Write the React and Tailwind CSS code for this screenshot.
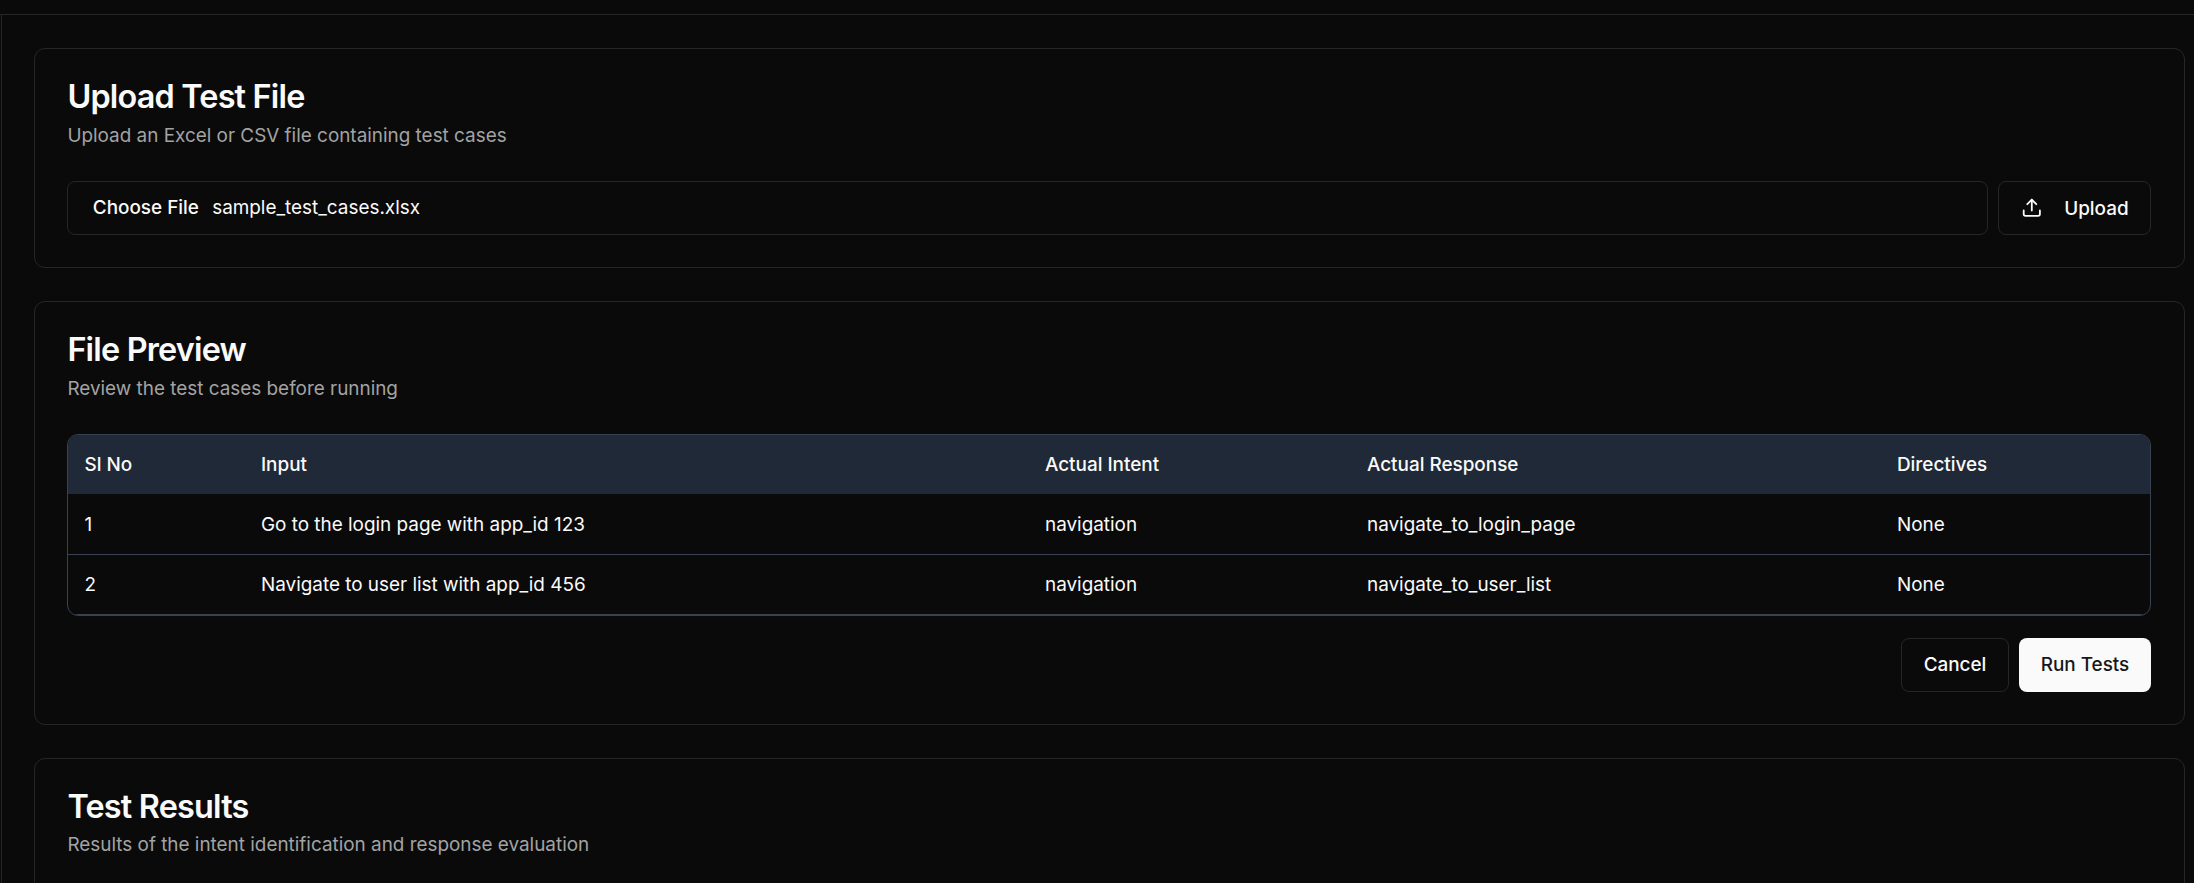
import { Upload } from "lucide-react";

const columns = ["Sl No", "Input", "Actual Intent", "Actual Response", "Directives"];

const rows = [
  ["1", "Go to the login page with app_id 123", "navigation", "navigate_to_login_page", "None"],
  ["2", "Navigate to user list with app_id 456", "navigation", "navigate_to_user_list", "None"],
];

const rowGrid = "grid grid-cols-[176.4px_784px_322px_530px_1fr] items-center";

function Card({ title, description, className = "", descriptionGap = "mt-[9px]", children }) {
  return (
    <section className={`shrink-0 rounded-[11px] border border-[#262626] pt-8 pr-[33px] pl-[32.4px] ${className}`}>
      <h2 className="text-[32.4px] leading-[32px] font-semibold tracking-[-0.81px]">{title}</h2>
      <p className={`${descriptionGap} text-[18.9px] leading-[27px] text-[#a3a3a3]`}>{description}</p>
      {children}
    </section>
  );
}

export default function App() {
  return (
    <div className="flex h-[883px] flex-col overflow-hidden bg-[#0a0a0a] font-['Inter',sans-serif] text-[18.9px] text-[#fafafa]">
      <header className="h-[15px] shrink-0 border-b border-[#262626]" />
      <div className="flex min-h-0 flex-1 pl-px">
        <main className="flex flex-1 flex-col gap-[33px] overflow-hidden border-l border-[#262626] pt-[33px] pr-[9px] pl-8">
          <Card title="Upload Test File" description="Upload an Excel or CSV file containing test cases" className="h-[220px]">
            <div className="mt-8 flex gap-[10px]">
              <div className="flex h-[54px] flex-1 items-center rounded-[8px] border border-[#262626] pl-[24.4px]">
                <span className="w-[119.4px] font-medium">Choose File</span>
                <span>sample_test_cases.xlsx</span>
              </div>
              <button className="flex h-[54px] w-[153px] items-center rounded-[8px] border border-[#262626] pl-[22px] font-medium">
                <Upload className="mr-[21.6px] size-[21.6px]" />
                <span className="pt-[3px]">Upload</span>
              </button>
            </div>
          </Card>

          <Card title="File Preview" description="Review the test cases before running" className="h-[424px]">
            <div className="mt-8 overflow-hidden rounded-[11px] border border-[#374151]">
              <div className={`${rowGrid} h-[59px] bg-[#1f2937] font-medium`}>
                {columns.map((c) => (
                  <div key={c} className="px-[16.2px] pt-0.5">{c}</div>
                ))}
              </div>
              {rows.map((r) => (
                <div key={r[0]} className={`${rowGrid} h-[61px] border-b border-[#374151] last:h-[60px]`}>
                  {r.map((v, i) => (
                    <div key={i} className="px-[16.2px] pt-0.5">{v}</div>
                  ))}
                </div>
              ))}
            </div>
            <div className="mt-[22px] flex justify-end gap-[10px]">
              <button className="h-[54px] w-[108px] rounded-[8px] border border-[#262626] font-medium">Cancel</button>
              <button className="h-[54px] w-[132px] rounded-[8px] bg-[#fafafa] font-medium text-[#171717]">Run Tests</button>
            </div>
          </Card>

          <Card
            title="Test Results"
            description="Results of the intent identification and response evaluation"
            className="h-[220px]"
            descriptionGap="mt-2"
          />
        </main>
      </div>
    </div>
  );
}
